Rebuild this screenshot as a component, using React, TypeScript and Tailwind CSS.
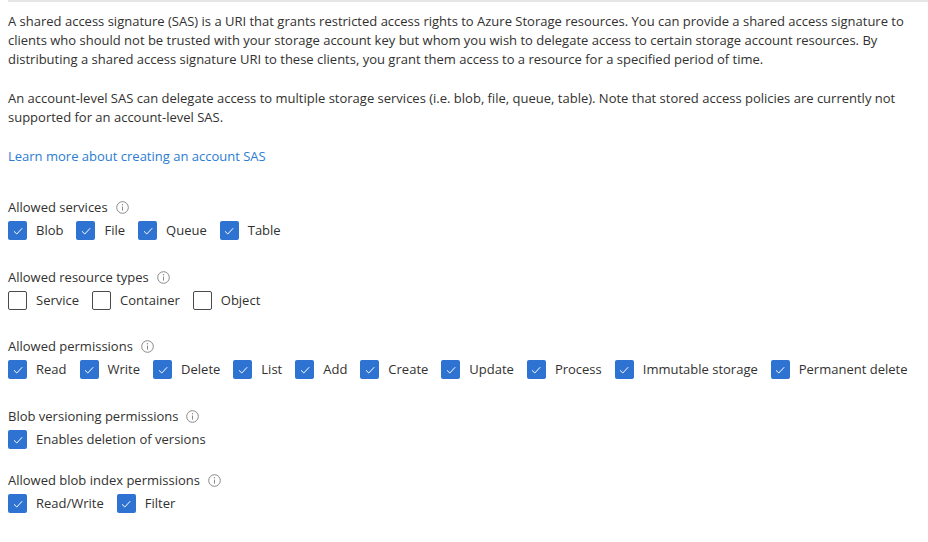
import React from "react";

const font = { fontFamily: '"Open Sans", "Noto Sans", Arial, sans-serif' };

function InfoIcon() {
  return (
    <svg width="13" height="13" viewBox="0 0 13 13" className="ml-[8px] shrink-0">
      <circle cx="6.5" cy="6.5" r="5.8" fill="none" stroke="#8a8886" strokeWidth="1" />
      <line x1="6.5" y1="5.6" x2="6.5" y2="9.6" stroke="#8a8886" strokeWidth="1" />
      <circle cx="6.5" cy="3.8" r="0.7" fill="#8a8886" />
    </svg>
  );
}

function Check({ label, checked }: { label: string; checked: boolean }) {
  return (
    <div className="flex items-center gap-[9px]">
      {checked ? (
        <span className="w-[19px] h-[19px] rounded-[2px] bg-[#2f73d2] flex items-center justify-center">
          <svg width="12" height="12" viewBox="0 0 12 12">
            <path d="M2 6.3 L4.8 9 L10.2 3.2" fill="none" stroke="#ffffff" strokeWidth="1" />
          </svg>
        </span>
      ) : (
        <span className="w-[19px] h-[19px] rounded-[2px] border border-[#4a4a4a] bg-white" />
      )}
      <span>{label}</span>
    </div>
  );
}

function Group({
  title,
  items,
  checked,
  className = "",
}: {
  title: string;
  items: string[];
  checked: boolean;
  className?: string;
}) {
  return (
    <div className={"flex flex-col gap-[4px] " + className}>
      <div className="flex items-center h-[19px]">
        <span>{title}</span>
        <InfoIcon />
      </div>
      <div className="flex items-center gap-[13px] h-[19px]">
        {items.map((it) => (
          <Check key={it} label={it} checked={checked} />
        ))}
      </div>
    </div>
  );
}

export default function App() {
  return (
    <div className="bg-white w-[928px] h-[542px] text-[#323130] text-[13px] leading-[19px]" style={font}>
      <div className="ml-[8px] border-t-2 border-[#e6e6e6] pt-[10px]">
        <p>
          A shared access signature (SAS) is a URI that grants restricted access rights to Azure Storage resources. You can provide a shared access signature to clients who should not be trusted with your storage account key but whom you wish to delegate access to certain storage account resources. By distributing a shared access signature URI to these clients, you grant them access to a resource for a specified period of time.
        </p>
        <p className="mt-[20px]">
          An account-level SAS can delegate access to multiple storage services (i.e. blob, file, queue, table). Note that stored access policies are currently not supported for an account-level SAS.
        </p>
        <a className="block mt-[20px] text-[#2b7cd3]">Learn more about creating an account SAS</a>
        <div className="mt-[32px] flex flex-col">
          <Group title="Allowed services" items={["Blob", "File", "Queue", "Table"]} checked />
          <Group
            className="mt-[28px]"
            title="Allowed resource types"
            items={["Service", "Container", "Object"]}
            checked={false}
          />
          <Group
            className="mt-[27px]"
            title="Allowed permissions"
            items={["Read", "Write", "Delete", "List", "Add", "Create", "Update", "Process", "Immutable storage", "Permanent delete"]}
            checked
          />
          <Group
            className="mt-[28px]"
            title="Blob versioning permissions"
            items={["Enables deletion of versions"]}
            checked
          />
          <Group
            className="mt-[22px]"
            title="Allowed blob index permissions"
            items={["Read/Write", "Filter"]}
            checked
          />
        </div>
      </div>
    </div>
  );
}
